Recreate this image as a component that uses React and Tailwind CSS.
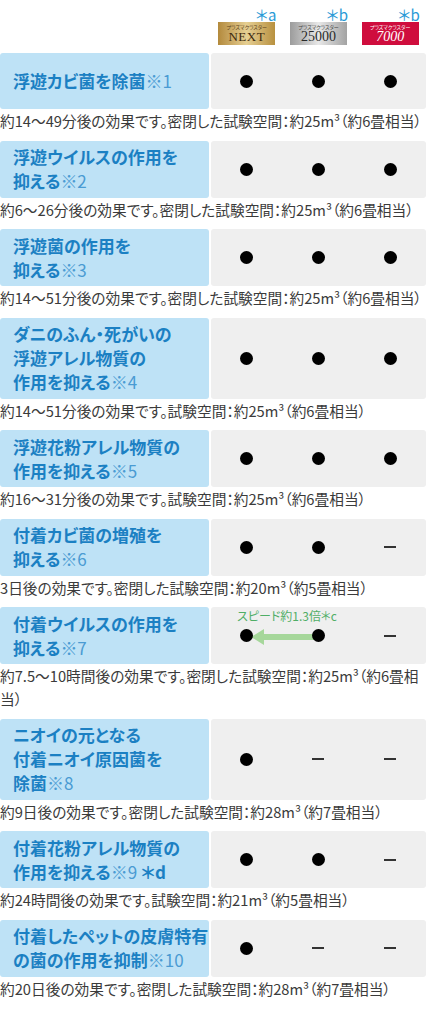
import React from 'react';

// 効果比較表（プラズマクラスター NEXT / 25000 / 7000）
const rows = [
  {
    lines: ['浮遊カビ菌を除菌'],
    note: '※1',
    marks: [1, 1, 1],
    caption: '約14〜49分後の効果です。密閉した試験空間：約25m³（約6畳相当）',
  },
  {
    lines: ['浮遊ウイルスの作用を', '抑える'],
    note: '※2',
    marks: [1, 1, 1],
    caption: '約6〜26分後の効果です。密閉した試験空間：約25m³（約6畳相当）',
  },
  {
    lines: ['浮遊菌の作用を', '抑える'],
    note: '※3',
    marks: [1, 1, 1],
    caption: '約14〜51分後の効果です。密閉した試験空間：約25m³（約6畳相当）',
  },
  {
    lines: ['ダニのふん・死がいの', '浮遊アレル物質の', '作用を抑える'],
    note: '※4',
    marks: [1, 1, 1],
    caption: '約14〜51分後の効果です。試験空間：約25m³（約6畳相当）',
  },
  {
    lines: ['浮遊花粉アレル物質の', '作用を抑える'],
    note: '※5',
    marks: [1, 1, 1],
    caption: '約16〜31分後の効果です。試験空間：約25m³（約6畳相当）',
  },
  {
    lines: ['付着カビ菌の増殖を', '抑える'],
    note: '※6',
    marks: [1, 1, 0],
    caption: '3日後の効果です。密閉した試験空間：約20m³（約5畳相当）',
  },
  {
    lines: ['付着ウイルスの作用を', '抑える'],
    note: '※7',
    marks: [1, 1, 0],
    speed: true,
    caption: '約7.5〜10時間後の効果です。密閉した試験空間：約25m³（約6畳相当）',
  },
  {
    lines: ['ニオイの元となる', '付着ニオイ原因菌を', '除菌'],
    note: '※8',
    marks: [1, 0, 0],
    caption: '約9日後の効果です。密閉した試験空間：約28m³（約7畳相当）',
  },
  {
    lines: ['付着花粉アレル物質の', '作用を抑える'],
    note: '※9',
    extra: ' ＊d',
    marks: [1, 1, 0],
    caption: '約24時間後の効果です。試験空間：約21m³（約5畳相当）',
  },
  {
    lines: ['付着したペットの皮膚特有', 'の菌の作用を抑制'],
    note: '※10',
    marks: [1, 0, 0],
    caption: '約20日後の効果です。密閉した試験空間：約28m³（約7畳相当）',
  },
];

const Logo = ({ type }) => {
  if (type === 'next') {
    return (
      <div className="w-[57px] h-[23px] flex flex-col items-center justify-center bg-gradient-to-r from-[#b38a3c] via-[#e6cf92] to-[#b8913f]">
        <span className="text-[5px] leading-[6px] text-[#5a4019]">プラズマクラスター</span>
        <span className="font-['Liberation_Serif',serif] text-[13px] leading-[13px] text-[#3d2a0e] tracking-[0.5px]">NEXT</span>
      </div>
    );
  }
  if (type === '25000') {
    return (
      <div className="w-[57px] h-[23px] flex flex-col items-center justify-center bg-gradient-to-r from-[#9c9c9c] via-[#e8e8e8] to-[#a3a3a3]">
        <span className="text-[5px] leading-[6px] text-[#444]">プラズマクラスター</span>
        <span className="font-['Liberation_Serif',serif] text-[14px] leading-[13px] text-[#2a2a2a]">25000</span>
      </div>
    );
  }
  return (
    <div className="w-[57px] h-[23px] flex flex-col items-center justify-center bg-[#cf0d3d]">
      <span className="text-[5px] leading-[6px] text-white">プラズマクラスター</span>
      <span className="font-['Liberation_Serif',serif] italic text-[14px] leading-[13px] text-white">7000</span>
    </div>
  );
};

const Mark = ({ on }) =>
  on ? (
    <span className="relative block w-[13px] h-[13px] rounded-full bg-black"></span>
  ) : (
    <span className="block w-[12px] h-[2px] bg-[#333]"></span>
  );

export default function App() {
  return (
    <div className="w-[426px] bg-white font-['Noto_Sans_CJK_JP','Noto_Sans',sans-serif] [font-feature-settings:'palt']">
      {/* ヘッダー：機種ロゴ */}
      <div className="flex pt-[7px] pb-[8px]">
        <div className="w-[211px]"></div>
        <div className="flex-1 grid grid-cols-3">
          {[
            ['＊a', 'next'],
            ['＊b', '25000'],
            ['＊b', '7000'],
          ].map(([label, type], i) => (
            <div key={i} className="flex flex-col items-center">
              <div className="w-[59px] text-right text-[15px] leading-[15px] text-[#2a9ad6]">{label}</div>
              <Logo type={type} />
            </div>
          ))}
        </div>
      </div>

      {rows.map((row, i) => (
        <div key={i} className="mb-[8.5px]">
          <div className="flex gap-[2px]">
            <div className="w-[209px] min-h-[56px] py-[4.5px] pl-[13px] flex items-center bg-[#bee2f6] rounded-[3px]">
              <p className="text-[17px] leading-[24px] font-bold text-[#1b80c3]">
                {row.lines.map((line, j) => (
                  <React.Fragment key={j}>
                    {line}
                    {j === row.lines.length - 1 ? (
                      <>
                        <span className="font-normal text-[#4a9bd3]">{row.note}</span>
                        {row.extra}
                      </>
                    ) : (
                      <br />
                    )}
                  </React.Fragment>
                ))}
              </p>
            </div>
            <div className="relative flex-1 grid grid-cols-3 items-center bg-[#efefef] rounded-[3px]">
              {row.speed && (
                <>
                  <span className="absolute left-[26px] top-[1px] text-[12px] leading-[16px] text-[#4fae66] whitespace-nowrap">
                    スピード約1.3倍＊c
                  </span>
                  <svg className="absolute left-[40px] top-[22px]" width="66" height="16" viewBox="0 0 66 16">
                    <polygon points="0,8 13,0 13,16" fill="#a6d79b" />
                    <rect x="12" y="5" width="54" height="6" fill="#a6d79b" />
                  </svg>
                </>
              )}
              {row.marks.map((m, k) => (
                <div key={k} className="flex justify-center">
                  <Mark on={m} />
                </div>
              ))}
            </div>
          </div>
          <p className="text-[14.7px] leading-[23px] text-[#3b3b3b]">{row.caption}</p>
        </div>
      ))}
    </div>
  );
}
